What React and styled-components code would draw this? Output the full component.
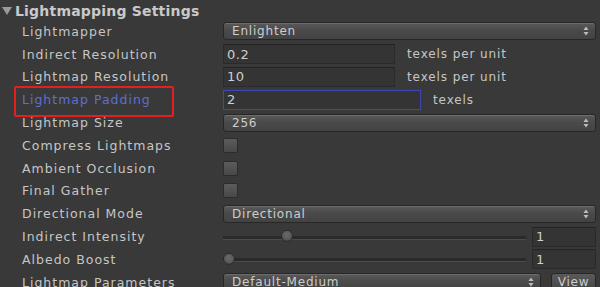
import React from 'react';
import styled, { createGlobalStyle } from 'styled-components';

const GlobalStyle = createGlobalStyle`
  html, body {
    margin: 0;
    padding: 0;
    background: #393939;
  }
`;

const rows = [
  { label: 'Lightmapper', type: 'select', value: 'Enlighten' },
  { label: 'Indirect Resolution', type: 'field', value: '0.2', width: 172, suffix: 'texels per unit' },
  { label: 'Lightmap Resolution', type: 'field', value: '10', width: 172, suffix: 'texels per unit' },
  { label: 'Lightmap Padding', type: 'field', value: '2', width: 198, suffix: 'texels', focused: true },
  { label: 'Lightmap Size', type: 'select', value: '256' },
  { label: 'Compress Lightmaps', type: 'check' },
  { label: 'Ambient Occlusion', type: 'check' },
  { label: 'Final Gather', type: 'check' },
  { label: 'Directional Mode', type: 'select', value: 'Directional' },
  { label: 'Indirect Intensity', type: 'slider', value: '1', pos: 0.19 },
  { label: 'Albedo Boost', type: 'slider', value: '1', pos: 0.0 },
  { label: 'Lightmap Parameters', type: 'params', value: 'Default-Medium' },
];

const SelectArrows = () => (
  <svg width="6" height="10" viewBox="0 0 6 10">
    <path d="M3 0.5 L5.5 4 L0.5 4 Z" fill="#bdbdbd" />
    <path d="M3 9.5 L5.5 6 L0.5 6 Z" fill="#bdbdbd" />
  </svg>
);

const Control = ({ row }) => {
  switch (row.type) {
    case 'select':
      return (
        <Select>
          <span>{row.value}</span>
          <SelectArrows />
        </Select>
      );
    case 'field':
      return (
        <>
          <Field $width={row.width} $focused={row.focused}>{row.value}</Field>
          <Suffix>{row.suffix}</Suffix>
        </>
      );
    case 'check':
      return <Check />;
    case 'slider':
      return (
        <>
          <Track>
            <Thumb style={{ left: `${row.pos * 100}%` }} />
          </Track>
          <Field $width={64}>{row.value}</Field>
        </>
      );
    case 'params':
      return (
        <>
          <Select>
            <span>{row.value}</span>
            <SelectArrows />
          </Select>
          <ViewButton>View</ViewButton>
        </>
      );
    default:
      return null;
  }
};

export default function App() {
  return (
    <Panel>
      <GlobalStyle />
      <Header>
        <Triangle />
        <span>Lightmapping Settings</span>
      </Header>
      <List>
        {rows.map((row) => (
          <Row key={row.label}>
            <Label $highlight={row.focused}>{row.label}</Label>
            <Controls>
              <Control row={row} />
            </Controls>
          </Row>
        ))}
      </List>
    </Panel>
  );
}

const Panel = styled.div`
  width: 600px;
  height: 287px;
  overflow: hidden;
  background: #393939;
  font-family: 'DejaVu Sans', 'Liberation Sans', sans-serif;
  color: #c6c6c6;
`;

const Header = styled.div`
  display: flex;
  align-items: center;
  height: 19px;
  padding: 1px 0 0 2px;
  gap: 3px;
  font-weight: bold;
  font-size: 14px;
  letter-spacing: 0.2px;
  color: #c9c9c9;
`;

const Triangle = styled.div`
  width: 0;
  height: 0;
  border-left: 5px solid transparent;
  border-right: 5px solid transparent;
  border-top: 8px solid #9a9a9a;
`;

const List = styled.div`
  display: grid;
  grid-auto-rows: 22.8px;
`;

const Row = styled.div`
  display: grid;
  grid-template-columns: 223px 1fr;
  align-items: center;
`;

const Label = styled.div`
  position: relative;
  padding-left: 22px;
  font-size: 12.5px;
  letter-spacing: 1px;
  white-space: nowrap;
  color: ${(p) => (p.$highlight ? '#5c6fd2' : '#c6c6c6')};

  ${(p) =>
    p.$highlight &&
    `
    &::after {
      content: '';
      position: absolute;
      left: 14px;
      top: -6px;
      width: 156px;
      height: 27px;
      border: 2px solid #e3201f;
      border-radius: 2px;
    }
  `}
`;

const Controls = styled.div`
  display: flex;
  align-items: center;
  padding-right: 4px;
`;

const Select = styled.div`
  flex: 1;
  display: flex;
  align-items: center;
  justify-content: space-between;
  height: 16px;
  padding: 0 6px 0 8px;
  border: 1px solid #272727;
  border-radius: 3px;
  background: linear-gradient(#5a5a5a, #4a4a4a 45%, #434343);
  box-shadow: inset 0 1px 0 rgba(255, 255, 255, 0.12);
  font-size: 12px;
  letter-spacing: 0.8px;
  color: #cdcdcd;
`;

const Field = styled.div`
  box-sizing: border-box;
  width: ${(p) => p.$width}px;
  height: 20px;
  display: flex;
  align-items: center;
  padding-left: 3px;
  background: #343434;
  border: 1px solid ${(p) => (p.$focused ? '#3b47b6' : '#2a2a2a')};
  border-top-color: ${(p) => (p.$focused ? '#3b47b6' : '#232323')};
  font-size: 13px;
  letter-spacing: 0.6px;
  color: #cfcfcf;
`;

const Suffix = styled.span`
  margin-left: 12px;
  font-size: 12px;
  letter-spacing: 0.9px;
  color: #c6c6c6;
`;

const Check = styled.div`
  width: 15px;
  height: 15px;
  box-sizing: border-box;
  border-radius: 2px;
  border: 1px solid #2c2c2c;
  background: linear-gradient(#5c5c5c, #484848);
`;

const Track = styled.div`
  position: relative;
  flex: 1;
  height: 3px;
  margin: 2px 6px 0 0;
  background: #2a2a2a;
  border-bottom: 1px solid #4b4b4b;
`;

const Thumb = styled.div`
  position: absolute;
  top: 50%;
  width: 12px;
  height: 12px;
  transform: translate(0, -60%);
  border-radius: 50%;
  background: radial-gradient(circle at 50% 40%, #6a6a6a, #4c4c4c);
  border: 1px solid #2b2b2b;
  box-sizing: border-box;
`;

const ViewButton = styled.div`
  display: flex;
  align-items: center;
  justify-content: center;
  width: 43px;
  height: 16px;
  margin-left: 10px;
  border: 1px solid #272727;
  border-radius: 3px;
  background: linear-gradient(#5a5a5a, #454545);
  font-size: 12px;
  letter-spacing: 0.8px;
  color: #cdcdcd;
`;
